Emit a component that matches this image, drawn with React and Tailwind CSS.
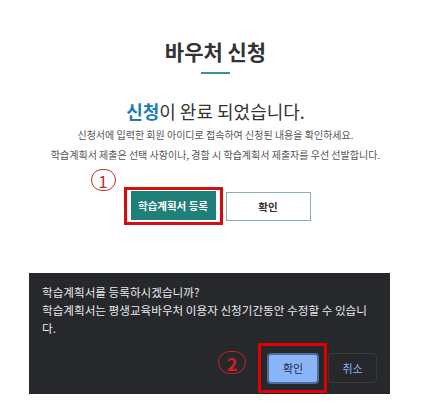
export default function App() {
  const font = { fontFamily: '"Noto Sans CJK KR", "Noto Sans", sans-serif' };
  return (
    <div className="w-[431px] h-[417px] bg-white relative overflow-hidden" style={font}>
      <div className="flex flex-col items-center pt-[36px]">
        <h1 className="text-[21px] leading-[30px] font-bold text-[#333]">바우처 신청</h1>
        <div className="mt-[6px] w-[29px] h-[2px] bg-[#3d8fa0]" />
        <p className="mt-[25px] text-[18px] leading-[24px] text-[#333]">
          <span className="font-bold text-[#1c7bb5]">신청</span>이 완료 되었습니다.
        </p>
        <p className="mt-[2px] text-[10px] leading-[20px] text-[#555] text-center">
          신청서에 입력한 회원 아이디로 접속하여 신청된 내용을 확인하세요.
          <br />
          학습계획서 제출은 선택 사항이나, 경함 시 학습계획서 제출자를 우선 선발합니다.
        </p>
        <div className="mt-[22px] flex items-start gap-[3px] ml-[3px]">
          <div className="relative border-[3px] border-[#d80c0c] px-[4px] pt-[1px] pb-[2px]">
            <div className="absolute left-[-36px] top-[-21px] w-[25px] h-[22px] rounded-full border-[1.5px] border-[#c0302b] flex items-center justify-center text-[17px] leading-none text-[#c0302b]">
              1
            </div>
            <button className="w-[85px] h-[29px] bg-[#1f7f79] text-white text-[10.5px] font-bold">
              학습계획서 등록
            </button>
          </div>
          <button className="mt-[5px] w-[85px] h-[29px] bg-white border border-[#86aeb2] text-[#333] text-[10.5px] font-bold">
            확인
          </button>
        </div>
      </div>
      <div className="absolute left-[29px] top-[273px] w-[361px] h-[121px] bg-[#27282c] pt-[10px] pl-[13px] pr-[13px] flex flex-col">
        <p className="w-[330px] text-[11.6px] leading-[18px] text-[#e8eaed]">
          학습계획서를 등록하시겠습니까?
          <br />
          학습계획서는 평생교육바우처 이용자 신청기간동안 수정할 수 있습니다.
        </p>
        <div className="mt-[6px] flex justify-end items-start">
          <div className="relative border-[3px] border-[#e00000] pl-[6px] pr-[5px] pt-[7px] pb-[6px]">
            <div className="absolute left-[-43px] top-[5px] w-[28px] h-[23px] rounded-full border-[1.5px] border-[#d02020] flex items-center justify-center text-[18px] font-bold leading-none text-[#d02020]">
              2
            </div>
            <button className="w-[52px] h-[31px] rounded-[4px] bg-[#8ab4f8] border-2 border-[#4a6d9e] text-[#1f2a3a] text-[11px]">
              확인
            </button>
          </div>
          <button className="ml-[1px] mt-[10px] w-[49px] h-[30px] rounded-[4px] border border-[#3a3b3f] text-[#8ab4f8] text-[11px]">
            취소
          </button>
        </div>
      </div>
    </div>
  );
}
